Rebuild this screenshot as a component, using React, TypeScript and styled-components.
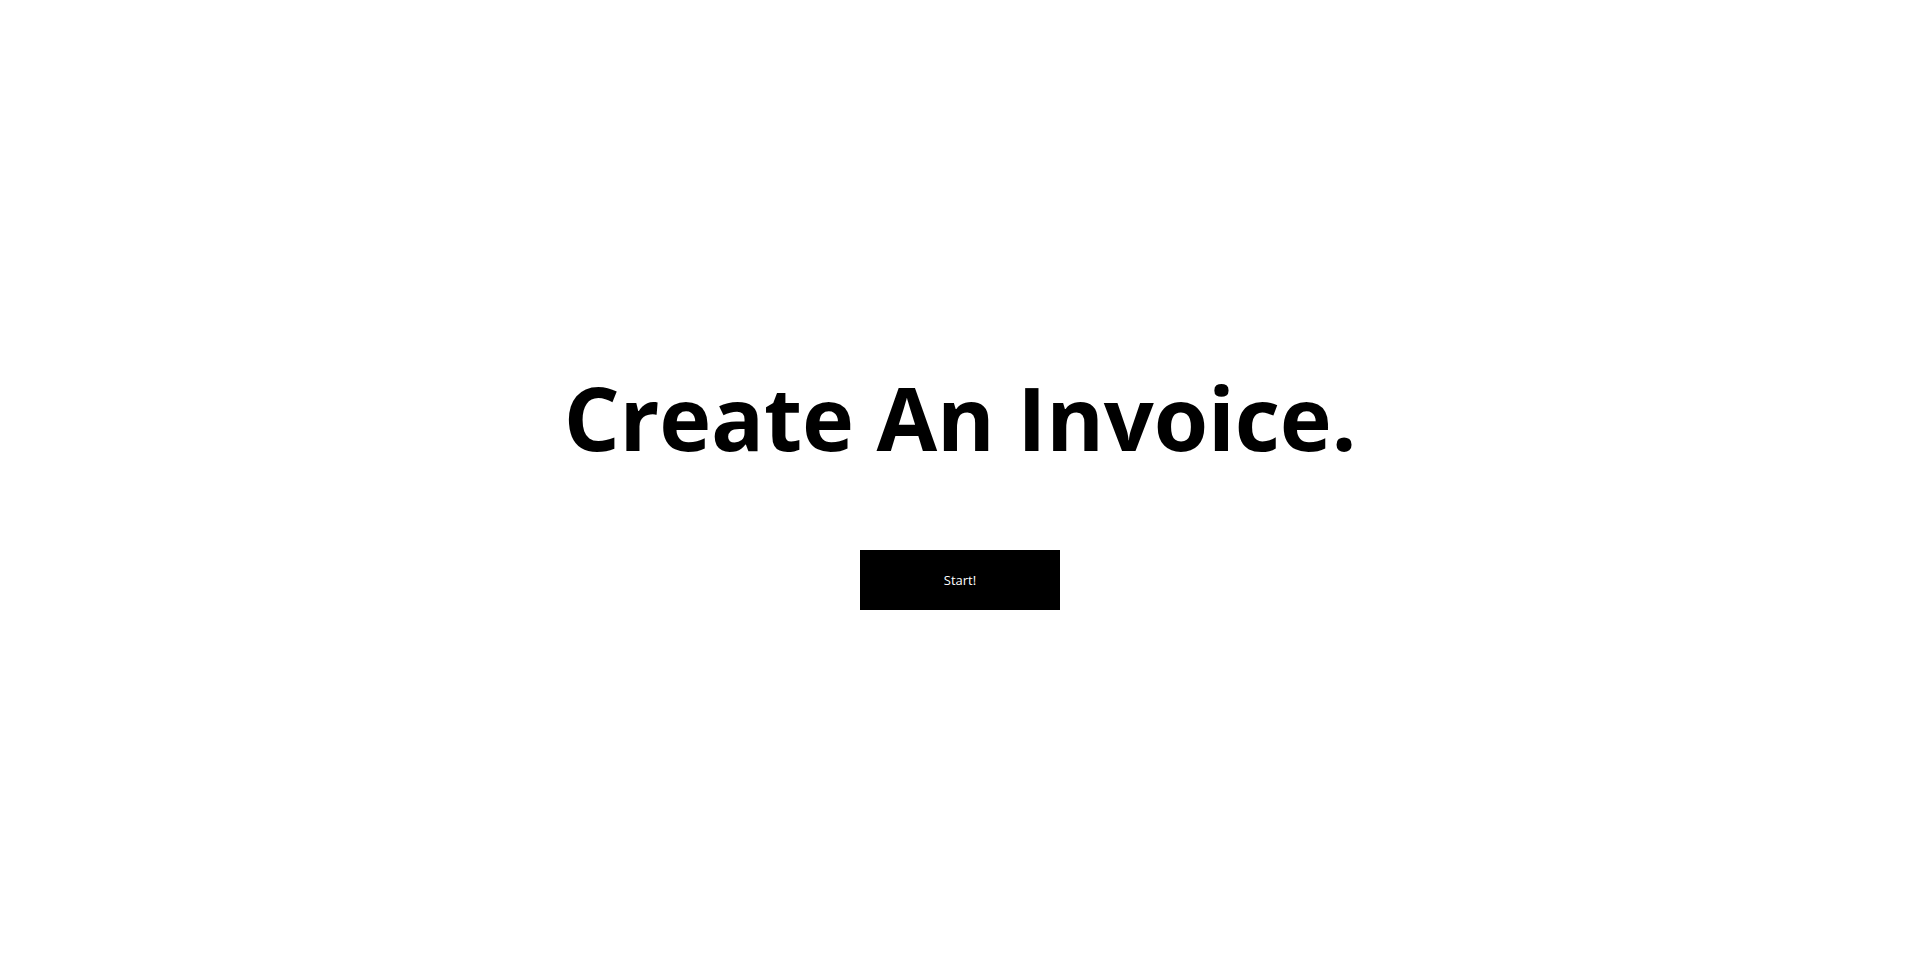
import React from "react";
import styled, { createGlobalStyle } from "styled-components";

const Global = createGlobalStyle`
  html, body { margin: 0; padding: 0; background: #fff; }
  body { font-family: "Open Sans", "Noto Sans", sans-serif; }
`;

const Page = styled.main`
  min-height: 965px;
  display: flex;
  flex-direction: column;
  align-items: center;
  justify-content: center;
  box-sizing: border-box;
  padding-top: 2px;
`;

const Title = styled.h1`
  margin: 0;
  font-family: "Open Sans", "Noto Sans", sans-serif;
  font-weight: 700;
  font-size: 88px;
  line-height: 120px;
  letter-spacing: -0.2px;
  color: #000;
`;

const StartButton = styled.button`
  margin-top: 73px;
  width: 200px;
  height: 60px;
  border: none;
  background: #000;
  color: #fff;
  font-family: "Open Sans", "Noto Sans", sans-serif;
  font-size: 13px;
  cursor: pointer;
`;

export default function App() {
  return (
    <>
      <Global />
      <Page>
        <Title>Create An Invoice.</Title>
        <StartButton>Start!</StartButton>
      </Page>
    </>
  );
}
